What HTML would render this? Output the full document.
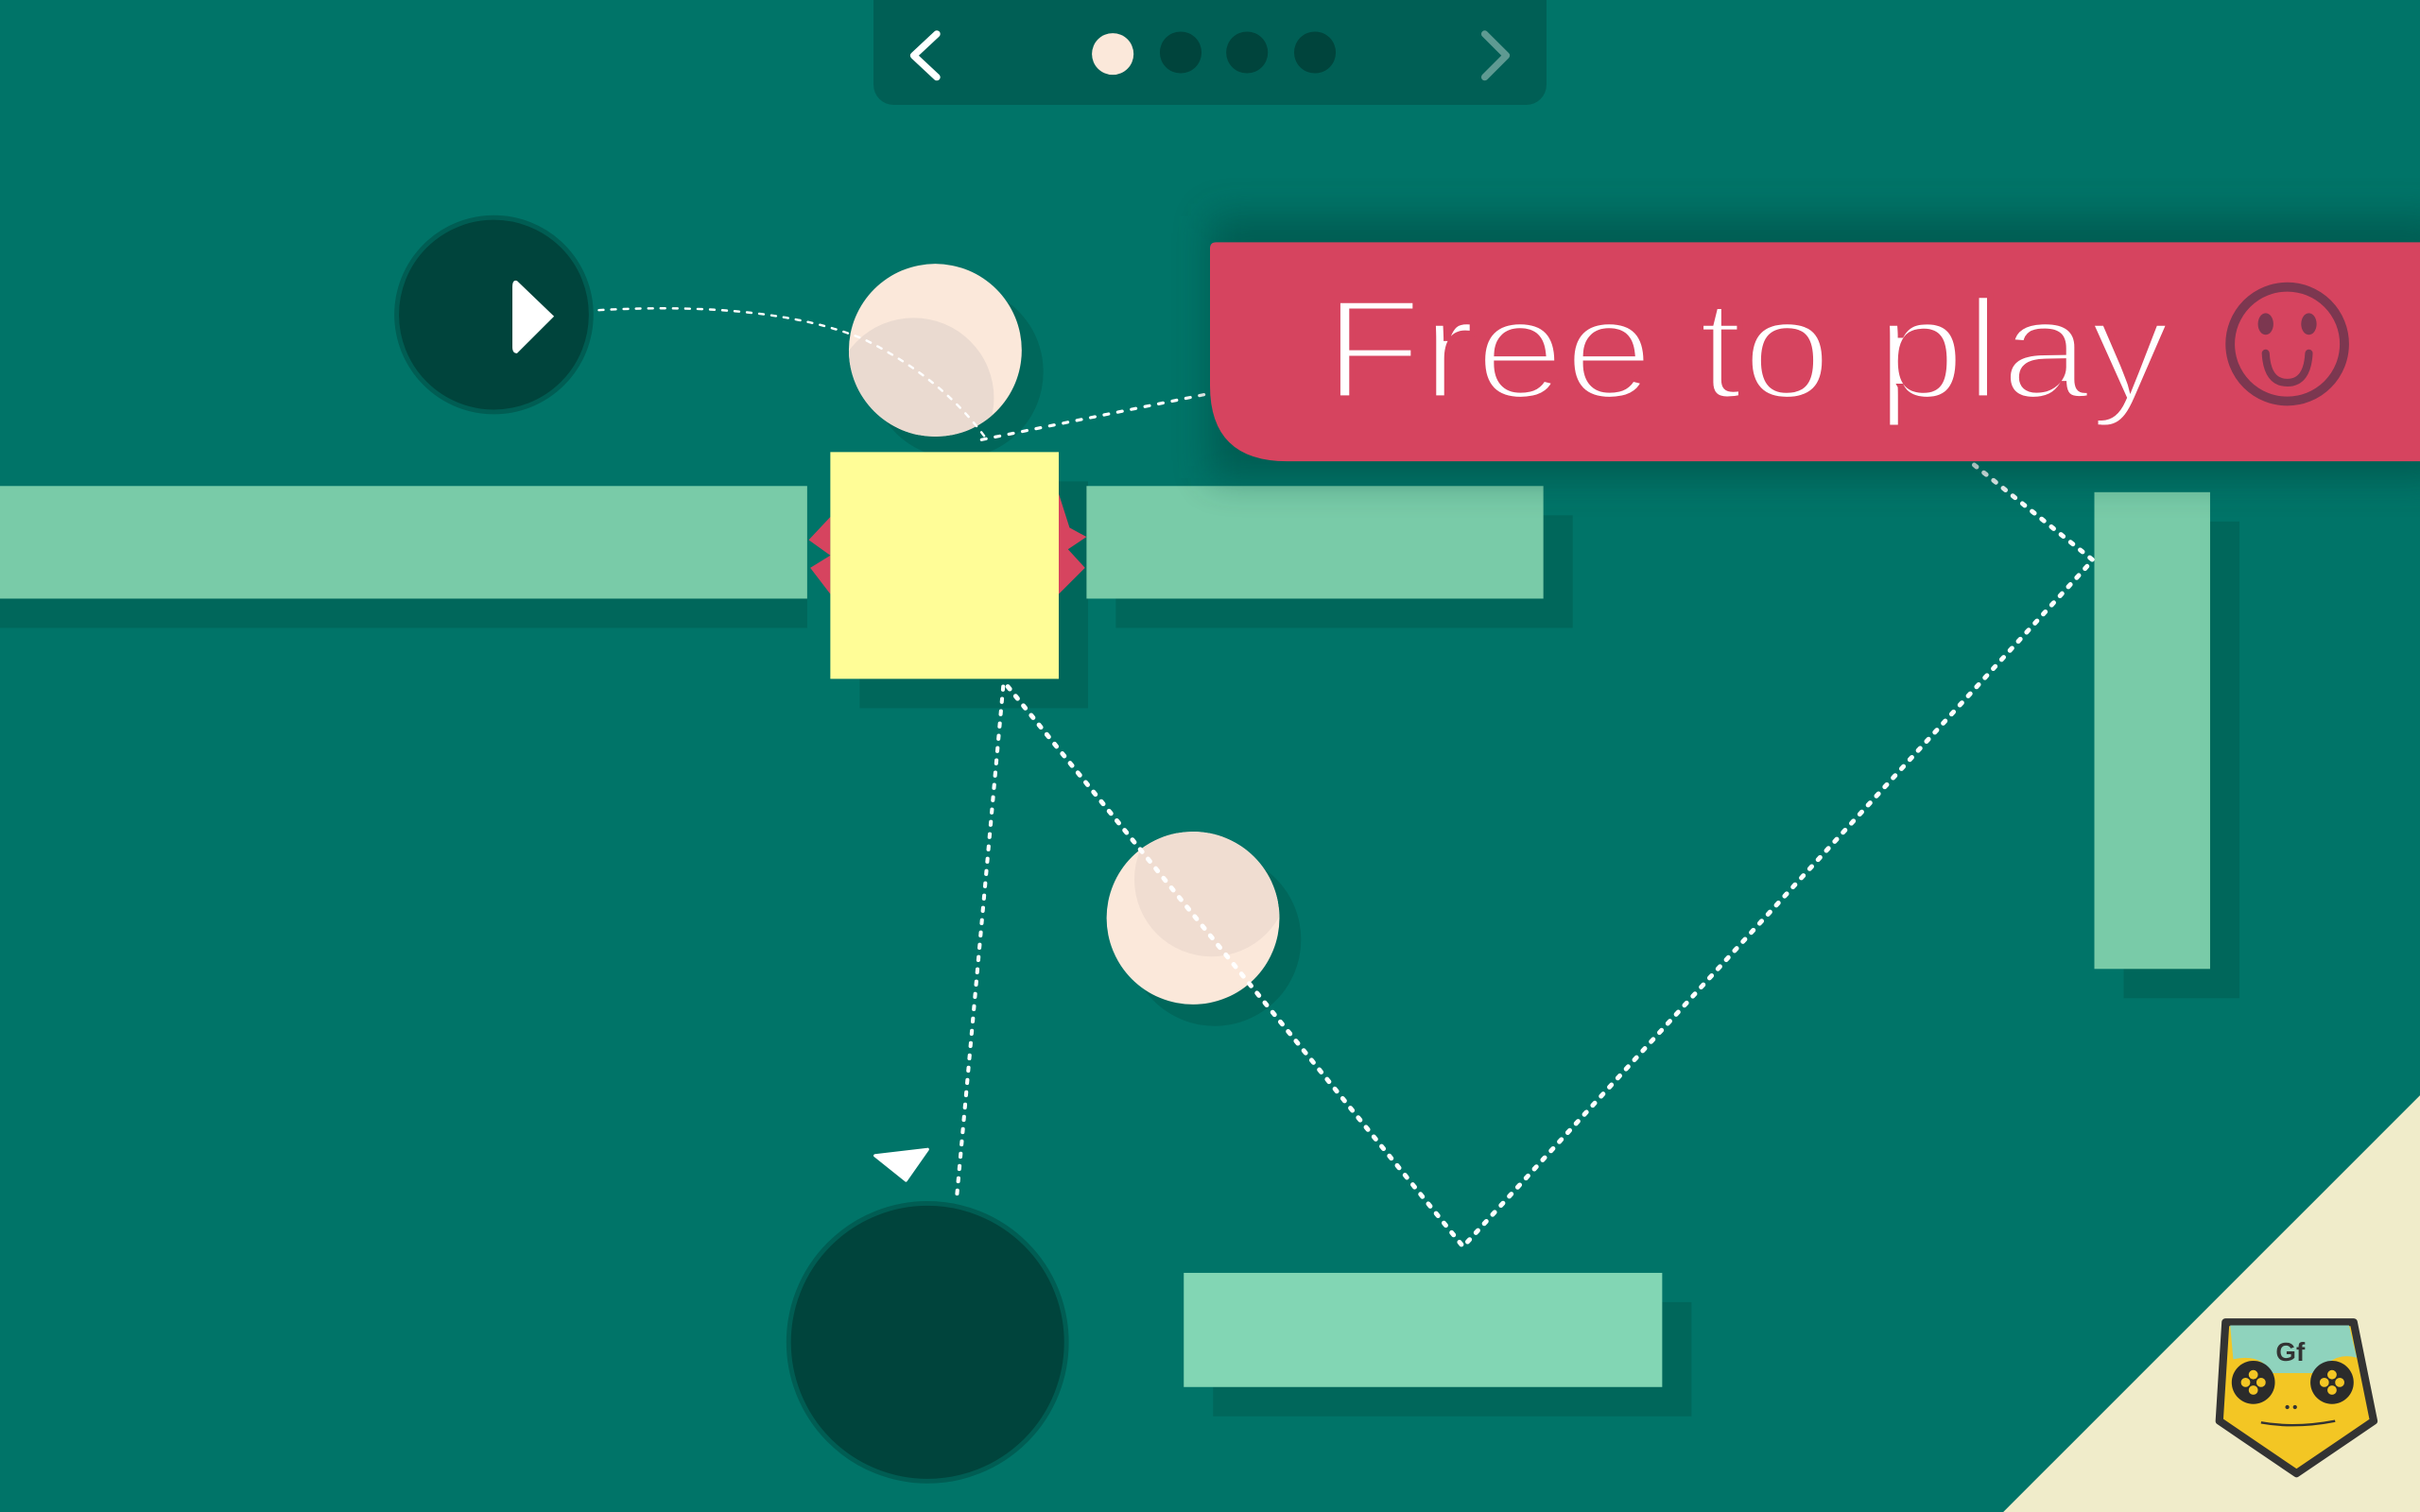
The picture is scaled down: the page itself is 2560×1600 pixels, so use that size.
<!DOCTYPE html>
<html><head><meta charset="utf-8"><style>
html,body{margin:0;padding:0;width:2560px;height:1600px;overflow:hidden;background:#007468}
svg{display:block}
</style></head><body>
<svg width="2560" height="1600" viewBox="0 0 1568 980" xmlns="http://www.w3.org/2000/svg">
<defs>
<filter id="bs" x="-20%" y="-50%" width="140%" height="200%"><feGaussianBlur stdDeviation="12"/></filter>
<clipPath id="c1"><circle cx="606" cy="227" r="56"/></clipPath>
<clipPath id="c2"><circle cx="773" cy="595" r="56"/></clipPath>
</defs>
<rect width="1568" height="980" fill="#007468"/>
<!-- nav -->
<rect x="566" y="-14" width="436" height="82" rx="13" fill="#005f55"/>
<path d="M607 22 L592 36 L607 50" fill="none" stroke="#fff" stroke-width="4.5" stroke-linecap="round" stroke-linejoin="round"/>
<path d="M962 22 L976 36 L962 50" fill="none" stroke="#5e9a92" stroke-width="4.5" stroke-linecap="round" stroke-linejoin="round"/>
<circle cx="721" cy="35" r="13.5" fill="#fbe8da"/>
<circle cx="765" cy="34" r="13.5" fill="#00443c"/>
<circle cx="808" cy="34" r="13.5" fill="#00443c"/>
<circle cx="852" cy="34" r="13.5" fill="#00443c"/>
<!-- shadows -->
<rect x="0" y="334" width="523" height="73" fill="#00675b"/>
<rect x="723" y="334" width="296" height="73" fill="#00675b"/>
<rect x="557" y="312" width="148" height="147" fill="#00675b"/>
<rect x="1376" y="338" width="75" height="309" fill="#00675b"/>
<rect x="786" y="844" width="310" height="74" fill="#00675b"/>
<circle cx="620" cy="241" r="56" fill="#00675b"/>
<circle cx="787" cy="609" r="56" fill="#00675b"/>
<!-- bars -->
<rect x="0" y="315" width="523" height="73" fill="#79cba8"/>
<rect x="704" y="315" width="296" height="73" fill="#79cba8"/>
<rect x="1357" y="319" width="75" height="309" fill="#79cba8"/>
<rect x="767" y="825" width="310" height="74" fill="#82d6b4"/>
<!-- red spikes -->
<path d="M538 335 L524 350 L538 360 L525 368 L538 385Z" fill="#d6445f"/>
<path d="M686 320 L693 342 L704 348 L692 356 L703 368 L686 385Z" fill="#d6445f"/>
<rect x="538" y="293" width="148" height="147" fill="#fffd97"/>
<!-- dark circles -->
<circle cx="320" cy="204" r="63" fill="#00443c" stroke="#005d53" stroke-width="3"/>
<path d="M335 182 L359 205 L335 229 Q332 229 332 225 L332 186 Q332 181 335 182Z" fill="#fff"/>
<circle cx="601" cy="870" r="90" fill="#00443c" stroke="#005d53" stroke-width="3"/>
<path d="M567 749 L601 745 L587 765Z" fill="#fff" stroke="#fff" stroke-width="2" stroke-linejoin="round"/>
<!-- balls -->
<circle cx="606" cy="227" r="56" fill="#fbe8da"/>
<circle cx="592" cy="258" r="52" fill="#eadad0" clip-path="url(#c1)"/>
<circle cx="773" cy="595" r="56" fill="#fbe8da"/>
<circle cx="785" cy="570" r="50" fill="#f0ddd1" clip-path="url(#c2)"/>
<!-- dotted lines -->
<g fill="none" stroke="#fff" stroke-linecap="round">
<path d="M388 201 Q500 195 560 220 Q610 245 638 283" stroke-width="1.5" stroke-dasharray="3 5"/>
<path d="M636 285 L784 255" stroke-width="2" stroke-dasharray="3 6"/>
<path d="M650 445 L620 775" stroke-width="2.5" stroke-dasharray="2 6"/>
<path d="M653 445 L948 808 L1356 363 L1275 298" stroke-width="3" stroke-dasharray="2 6"/>
</g>
<!-- banner -->
<rect x="784" y="140" width="800" height="170" fill="#003f38" opacity="0.45" filter="url(#bs)"/>
<path d="M788 157 L1568 157 L1568 299 L834 299 Q784 299 784 250 L784 161 Q784 157 788 157Z" fill="#d6445f"/>
<text x="858" y="258" font-family="Liberation Sans, sans-serif" font-size="92" fill="#fff" textLength="548" lengthAdjust="spacingAndGlyphs" stroke="#d6445f" stroke-width="3.5" paint-order="fill">Free to play</text>
<circle cx="1482" cy="223" r="37" fill="none" stroke="#7c3750" stroke-width="6"/>
<ellipse cx="1468" cy="210" rx="5" ry="7" fill="#7c3750"/>
<ellipse cx="1496" cy="210" rx="5" ry="7" fill="#7c3750"/>
<path d="M1468 229 Q1469 248 1482 248 Q1495 248 1496 229" fill="none" stroke="#7c3750" stroke-width="5" stroke-linecap="round"/>
<!-- corner -->
<path d="M1568 710 L1298 980 L1568 980Z" fill="#f0ecca"/>
<!-- logo -->
<g transform="translate(1437,857)">
<path d="M5 0 L88 0 L101 64 L51 98 L1 64Z" fill="#f3c624" stroke="#333" stroke-width="5" stroke-linejoin="round"/>
<path d="M8 2 L85 2 L90 23 Q80 20 72 26 L65 33 L35 33 Q28 20 10 24Z" fill="#8fd3bd"/>
<text x="47" y="25" font-family="Liberation Sans, sans-serif" font-size="17" font-weight="bold" fill="#333" text-anchor="middle">Gf</text>
<circle cx="23" cy="39" r="14" fill="#2b2b2b"/>
<circle cx="74" cy="39" r="14" fill="#2b2b2b"/>
<g fill="#f3c624"><circle cx="23" cy="34" r="3"/><circle cx="23" cy="44" r="3"/><circle cx="18" cy="39" r="3"/><circle cx="28" cy="39" r="3"/>
<circle cx="74" cy="34" r="3"/><circle cx="74" cy="44" r="3"/><circle cx="69" cy="39" r="3"/><circle cx="79" cy="39" r="3"/></g>
<circle cx="45" cy="55" r="1.3" fill="#333"/><circle cx="50" cy="55" r="1.3" fill="#333"/>
<path d="M28 65 Q50 69 76 64" fill="none" stroke="#333" stroke-width="1.5"/>
</g>
</svg>
</body></html>
